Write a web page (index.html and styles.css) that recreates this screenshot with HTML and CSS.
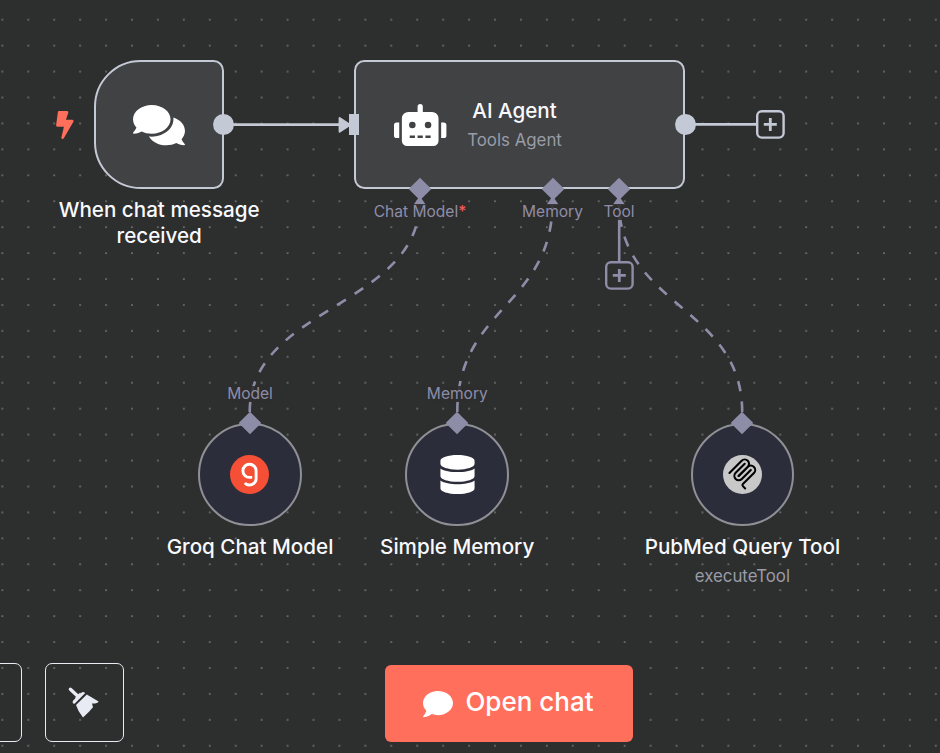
FILE: index.html
```html
<!DOCTYPE html>
<html lang="en">
<head>
<meta charset="utf-8">
<title>Workflow</title>
<link rel="stylesheet" href="styles.css">
</head>
<body>
<main class="canvas">
  <svg class="edges" width="940" height="753" viewBox="0 0 940 753">
    <defs>
      <pattern id="dots" x="-10.6" y="6.7" width="25.93" height="25.93" patternUnits="userSpaceOnUse">
        <circle cx="12.96" cy="12.96" r="0.85" fill="#8e8f90"/>
      </pattern>
    </defs>
    <rect width="940" height="753" fill="url(#dots)"/>
    <g class="edge-main">
      <path d="M224 124.6H342"/>
      <path d="M685 124.4H757"/>
    </g>
    <path class="arrow-main" d="M339.6 118L350 124.8L339.6 131.6Z"/>
    <g class="edge-sub">
      <path d="M249.7 412C249.7 306.5 419.7 306.5 419.7 201"/>
      <path d="M457.3 412C457.3 306.5 552.6 306.5 552.6 201"/>
      <path d="M742.2 412C742.2 306.5 618.9 306.5 618.9 201"/>
    </g>
    <path class="edge-add" d="M619.2 201V262"/>
    <g class="arrow-sub">
      <path d="M419.7 196L426.2 205.3H413.2Z"/>
      <path d="M552.6 196L559.1 205.3H546.1Z"/>
      <path d="M618.9 196L625.4 205.3H612.4Z"/>
    </g>
  </svg>

  <svg class="bolt" viewBox="0 0 320 512"><path d="M296 160H180.6l42.6-129.8C227.2 15 215.7 0 200 0H56C44 0 33.8 8.9 32.2 20.8l-32 240C-1.7 275.2 9.5 288 24 288h118.7L96.6 482.5c-3.6 15.2 8 29.5 23.3 29.5 8.4 0 16.4-4.4 20.8-12l176-304c9.3-15.9-2.2-36-20.7-36z"/></svg>

  <section class="node trigger">
    <svg class="node-icon" viewBox="0 0 576 512"><path d="M416 192c0-88.4-93.1-160-208-160S0 103.6 0 192c0 34.3 14.1 65.9 38 92-13.4 30.2-35.5 54.2-35.8 54.5-2.2 2.3-2.8 5.7-1.5 8.7S4.8 352 8 352c36.6 0 66.9-12.3 88.7-25 32.2 15.7 70.3 25 111.3 25 114.9 0 208-71.6 208-160zm122 220c23.9-26 38-57.7 38-92 0-66.9-53.5-124.2-129.3-148.1.9 6.6 1.3 13.3 1.3 20.1 0 105.9-107.7 192-240 192-10.8 0-21.3-.8-31.7-1.9C207.8 439.6 281.8 480 368 480c41 0 79.1-9.2 111.3-25 21.8 12.7 52.1 25 88.7 25 3.2 0 6.1-1.9 7.3-4.8 1.3-2.9.7-6.3-1.5-8.7-.3-.3-22.4-24.2-35.8-54.5z"/></svg>
    <i class="port-out"></i>
  </section>
  <h2 class="name name-trigger">When chat message<br>received</h2>

  <section class="node agent">
    <svg class="node-icon" viewBox="0 0 640 512"><path d="M32,224H64V416H32A31.96,31.96,0,0,1,0,384V256A31.96,31.96,0,0,1,32,224Zm512-48V448a64.06,64.06,0,0,1-64,64H160a64.06,64.06,0,0,1-64-64V176a79.974,79.974,0,0,1,80-80H288V32a32,32,0,0,1,64,0V96H464A79.974,79.974,0,0,1,544,176ZM264,256a40,40,0,1,0-40,40A39.997,39.997,0,0,0,264,256Zm-8,128H192v32h64Zm96,0H288v32h64ZM456,256a40,40,0,1,0-40,40A39.997,39.997,0,0,0,456,256Zm-8,128H384v32h64ZM640,256V384a31.96,31.96,0,0,1-32,32H576V224h32A31.96,31.96,0,0,1,640,256Z"/></svg>
    <div class="agent-text">
      <h2 class="title">AI Agent</h2>
      <p class="subtitle">Tools Agent</p>
    </div>
    <i class="port-in"></i>
    <i class="port-out"></i>
    <i class="diamond d-model"></i>
    <i class="diamond d-memory"></i>
    <i class="diamond d-tool"></i>
  </section>
  <span class="label l-chat-model">Chat Model<b class="required">*</b></span>
  <span class="label l-memory">Memory</span>
  <span class="label l-tool">Tool</span>

  <svg class="add add-next" viewBox="0 0 29 29"><rect x="1.2" y="1.2" width="26.4" height="26.4" rx="4.6"/><path d="M14.3 7.9V20.9M7.8 14.4H20.8"/></svg>
  <svg class="add add-tool" viewBox="0 0 29 29"><rect x="1.2" y="1.2" width="26.4" height="26.4" rx="4.6"/><path d="M14.3 7.9V20.9M7.8 14.4H20.8"/></svg>

  <section class="node sub groq">
    <svg class="sub-icon" viewBox="0 0 39 39"><circle cx="19.5" cy="19.5" r="19.5" fill="#f55036"/><path d="M22.2 22.4H19.4A6.6 6.6 0 1 1 26.1 15.8V23A6.6 6.6 0 0 1 14.8 28" fill="none" stroke="#fff" stroke-width="2.9"/></svg>
    <i class="diamond d-top"></i>
  </section>
  <span class="label l-groq">Model</span>
  <h2 class="name name-groq">Groq Chat Model</h2>

  <section class="node sub memory">
    <svg class="sub-icon" viewBox="0 0 448 512"><path fill="#fff" d="M448 73.143v45.714C448 159.143 347.667 192 224 192S0 159.143 0 118.857V73.143C0 32.857 100.333 0 224 0s224 32.857 224 73.143zM448 176v102.857C448 319.143 347.667 352 224 352S0 319.143 0 278.857V176c48.125 33.143 136.208 48.572 224 48.572S399.874 209.143 448 176zm0 160v102.857C448 479.143 347.667 512 224 512S0 479.143 0 438.857V336c48.125 33.143 136.208 48.572 224 48.572S399.874 369.143 448 336z"/></svg>
    <i class="diamond d-top"></i>
  </section>
  <span class="label l-sub-memory">Memory</span>
  <h2 class="name name-memory">Simple Memory</h2>

  <section class="node sub pubmed">
    <svg class="sub-icon" viewBox="0 0 39 39"><circle cx="19.5" cy="19.5" r="19.5" fill="#c8c8c8"/><g transform="translate(3.2 2.7) scale(.18)" fill="none" stroke="#000" stroke-width="11.5" stroke-linecap="round"><path d="M18 84.85L85.88 16.97C95.25 7.6 110.45 7.6 119.82 16.97C129.2 26.34 129.2 41.54 119.82 50.91L68.56 102.18"/><path d="M69.27 101.47L119.82 50.91C129.2 41.54 144.39 41.54 153.77 50.91L154.12 51.27C163.49 60.64 163.49 75.83 154.12 85.21L92.72 146.6C89.6 149.72 89.6 154.79 92.72 157.91L105.33 170.52"/><path d="M102.85 33.94L52.65 84.15C43.28 93.52 43.28 108.71 52.65 118.09C62.02 127.46 77.22 127.46 86.59 118.09L136.79 67.88"/></g></svg>
    <i class="diamond d-top"></i>
  </section>
  <div class="name name-pubmed">
    <h2 class="title">PubMed Query Tool</h2>
    <p class="subtitle">executeTool</p>
  </div>

  <button class="tool-btn tool-left" aria-label="Zoom"></button>
  <button class="tool-btn tool-tidy" aria-label="Tidy up">
    <svg class="broom" viewBox="0 0 32 32"><path d="M3.4 3.2L11.4 10.8" fill="none" stroke="#e8ebf4" stroke-width="3.4" stroke-linecap="round"/><path d="M6.2 17.6Q4.8 16.1 6.2 14.4L8.2 12.6L8.4 11.2L12.2 7.2L13.8 7.2Q16 5.1 17.6 6.6L18 7.3L7.6 17.7Z"/><path d="M19.8 8.4L31.6 15.6Q30.6 17.8 25 17.6L26 21.2Q22 26 16 31.6Q11 25.4 9 18.9Z"/></svg>
  </button>
  <button class="open-chat">
    <svg class="chat-icon" viewBox="0 0 512 512"><path d="M256 32C114.6 32 0 125.1 0 240c0 49.6 21.4 95 57 130.7C44.5 421.1 2.7 466 2.2 466.5c-2.2 2.3-2.8 5.7-1.5 8.7S4.8 480 8 480c66.3 0 116-31.8 140.6-51.4 32.7 12.3 69 19.4 107.4 19.4 141.4 0 256-93.1 256-208S397.4 32 256 32z"/></svg>
    <span>Open chat</span>
  </button>
</main>
</body>
</html>
```
FILE: styles.css
```css
* { box-sizing: border-box; }
body { margin: 0; background: #2d2e2e; font-family: Inter, "Liberation Sans", sans-serif; }
h2, p { margin: 0; }
.canvas { position: relative; width: 940px; height: 753px; overflow: hidden; background: #2d2e2e; }
.edges { position: absolute; left: 0; top: 0; }
.edge-main path { stroke: #c3c9d5; stroke-width: 2.6; }
.arrow-main { fill: #c3c9d5; stroke: #c3c9d5; stroke-width: 2; stroke-linejoin: round; }
.edge-sub path { fill: none; stroke: #8d8da8; stroke-width: 2.6; stroke-dasharray: 10.37 10.37; }
.edge-add { stroke: #8d8da8; stroke-width: 2.6; }
.arrow-sub { fill: #8d8da8; }

.bolt { position: absolute; left: 56px; top: 110.7px; width: 17.7px; height: 28px; fill: #ff6f5c; }

.node { position: absolute; display: flex; align-items: center; border: 2px solid #c3c9d5; background: #414244; }
.node-icon { height: 52px; fill: #fff; }
.trigger { left: 94.4px; top: 59.8px; width: 129.6px; height: 129.6px; justify-content: center; border-radius: 46.7px 10.4px 10.4px 46.7px; }
.trigger .node-icon { width: 52px; height: 46.2px; }
.agent { left: 353.5px; top: 59.8px; width: 331.8px; height: 129.6px; padding-left: 38.7px; gap: 20.6px; border-radius: 10.4px; }
.agent .node-icon { width: 52.4px; height: 42px; }
.agent-text { text-align: center; margin-top: -.3px; }
.title, .name { color: #f8f9fd; font-size: 20.62px; line-height: 26px; font-weight: 500; white-space: nowrap; }
.subtitle { color: #9a9ca6; font-size: 16.85px; line-height: 22px; font-weight: 400; margin-top: 5px; }

.port-out { position: absolute; right: -12.4px; top: 52.5px; width: 21px; height: 21px; border-radius: 50%; background: #c3c9d5; }
.port-in { position: absolute; left: -7px; top: 52.3px; width: 10.5px; height: 21px; background: #c3c9d5; }
.diamond { position: absolute; width: 16px; height: 16px; background: #8d8da8; transform: rotate(45deg); }
.d-model { left: 56.2px; bottom: -10px; }
.d-memory { left: 189.1px; bottom: -10px; }
.d-tool { left: 255.4px; bottom: -10px; }
.d-top { left: 41.8px; top: -9.8px; }

.name { position: absolute; transform: translateX(-50%); text-align: center; }
.name-trigger { left: 159.2px; top: 197px; }
.name-groq { left: 250px; top: 534px; }
.name-memory { left: 457.2px; top: 534px; }
.name-pubmed { left: 742.4px; top: 534px; }

.label { position: absolute; transform: translateX(-50%); color: #8d8da8; background: rgba(45, 46, 46, .88); font-size: 15.55px; line-height: 16px; white-space: nowrap; }
.required { color: #f25a5a; font-weight: 500; }
.l-chat-model { left: 420px; top: 204px; }
.l-memory { left: 552.5px; top: 204px; }
.l-tool { left: 619px; top: 204px; }
.l-groq { left: 250px; top: 386px; }
.l-sub-memory { left: 457.3px; top: 386px; }

.add { position: absolute; width: 29px; height: 29px; fill: none; stroke-width: 2.4; }
.add path { stroke-width: 2.8; }
.add-next { left: 756.2px; top: 110px; stroke: #c3c9d5; }
.add-tool { left: 605px; top: 260.6px; stroke: #8d8da8; }
.add-tool rect, .add-next rect { fill: #2d2e2e; }

.sub { top: 422.5px; width: 103.7px; height: 103.7px; justify-content: center; border-color: #8f9096; border-radius: 50%; background: #2c2d3a; }
.sub-icon { width: 39px; height: 39px; }
.groq { left: 198px; }
.memory { left: 405.3px; }
.pubmed { left: 690.5px; }

.tool-btn { position: absolute; top: 663px; width: 79px; height: 79px; display: flex; align-items: center; justify-content: center; padding: 0; border: 1px solid #e8ebf4; border-radius: 7px; background: transparent; }
.tool-left { left: -57px; }
.tool-tidy { left: 45px; padding: 0 3px 1px 0; }
.broom { width: 32px; height: 32px; fill: #e8ebf4; overflow: visible; }

.open-chat { position: absolute; left: 385px; top: 665px; width: 248px; height: 77px; display: flex; align-items: center; justify-content: center; gap: 12px; padding: 0 1px 4px 0; border: 0; border-radius: 6px; background: #ff6f5c; color: #fff; font: 500 26px/30px Inter, "Liberation Sans", sans-serif; }
.chat-icon { width: 30px; height: 30px; fill: #fff; position: relative; top: 2px; }
```
